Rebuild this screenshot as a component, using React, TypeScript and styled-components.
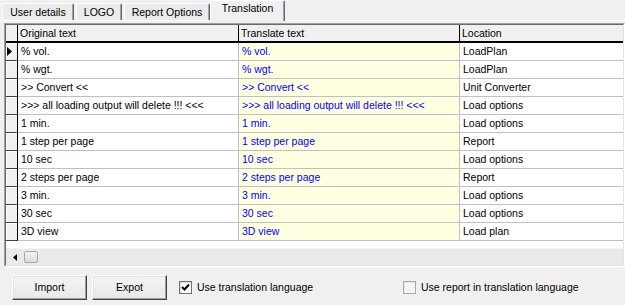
import styled, { createGlobalStyle } from 'styled-components';

const GlobalStyle = createGlobalStyle`
  html, body {
    margin: 0;
    padding: 0;
    background: #f0f0f0;
  }
  body {
    font-family: 'Liberation Sans', Arial, sans-serif;
    font-size: 10.5px;
    color: #000;
  }
`;

const rows = [
  { original: '% vol.', location: 'LoadPlan' },
  { original: '% wgt.', location: 'LoadPlan' },
  { original: '>> Convert <<', location: 'Unit Converter' },
  { original: '>>> all loading output will delete !!! <<<', location: 'Load options' },
  { original: '1 min.', location: 'Load options' },
  { original: '1 step per page', location: 'Report' },
  { original: '10 sec', location: 'Load options' },
  { original: '2 steps per page', location: 'Report' },
  { original: '3 min.', location: 'Load options' },
  { original: '30 sec', location: 'Load options' },
  { original: '3D view', location: 'Load plan' },
];

const tabs = [
  { label: 'User details', width: 72 },
  { label: 'LOGO', width: 46 },
  { label: 'Report Options', width: 86 },
  { label: 'Translation', width: 72, active: true },
];

export default function App() {
  return (
    <>
      <GlobalStyle />
      <Window>
        <TabBar>
          {tabs.map(({ label, width, active }) => (
            <Tab key={label} $width={width} $active={!!active}>
              {label}
            </Tab>
          ))}
        </TabBar>

        <Page>
          <GridFrame>
            <GridInner>
              <Table>
                <IndicatorHead />
                <HeadCell>Original text</HeadCell>
                <HeadCell>Translate text</HeadCell>
                <HeadCell $last>Location</HeadCell>

                {rows.map(({ original, location }, index) => (
                  <Row key={original}>
                    <Indicator>
                      {index === 0 && (
                        <svg width='5' height='9' viewBox='0 0 5 9'>
                          <path d='M0 0 L5 4.5 L0 9 Z' fill='#000' />
                        </svg>
                      )}
                    </Indicator>
                    <Cell>{original}</Cell>
                    <Cell $translated>{original}</Cell>
                    <Cell $last>{location}</Cell>
                  </Row>
                ))}
              </Table>

              <Empty />

              <HScroll>
                <ScrollArrow>
                  <svg width='4' height='7' viewBox='0 0 4 7'>
                    <path d='M4 0 L0 3.5 L4 7 Z' fill='#000' />
                  </svg>
                </ScrollArrow>
                <Thumb />
              </HScroll>
            </GridInner>
          </GridFrame>

          <Footer>
            <Button>Import</Button>
            <Button>Expot</Button>
            <Check $width={219} $first>
              <Box $checked>
                <svg width='9' height='9' viewBox='0 0 9 9'>
                  <path d='M1 4 L3.5 6.5 L8 1.5' stroke='#000' strokeWidth='2' fill='none' />
                </svg>
              </Box>
              Use translation language
            </Check>
            <Check>
              <Box />
              Use report in translation language
            </Check>
          </Footer>
        </Page>
      </Window>
    </>
  );
}

const Window = styled.div`
  width: 625px;
  height: 305px;
  overflow: hidden;
  display: flex;
  flex-direction: column;
  background: #f0f0f0;
`;

const TabBar = styled.div`
  height: 20px;
  display: flex;
  align-items: flex-end;
  gap: 2px;
  padding-left: 2px;
  position: relative;
  z-index: 1;
`;

const Tab = styled.div<{ $width: number; $active: boolean }>`
  box-sizing: border-box;
  width: ${(p) => p.$width + (p.$active ? 3 : 0)}px;
  height: ${(p) => (p.$active ? 21 : 17)}px;
  margin: ${(p) => (p.$active ? '0 0 -1px -2px' : '0')};
  padding-top: ${(p) => (p.$active ? 1 : 2)}px;
  line-height: 13px;
  text-align: center;
  background: ${(p) => (p.$active ? '#f0f0f0' : '#ebebeb')};
  border-top: 1px solid #fff;
  border-left: 1px solid #fff;
  border-right: 1px solid #696969;
  box-shadow: inset -1px 0 #a0a0a0;
  border-radius: 2px 2px 0 0;
  white-space: nowrap;
`;

const Page = styled.div`
  flex: 1;
  display: flex;
  flex-direction: column;
  border-top: 1px solid #fff;
  padding-top: 2px;
`;

const GridFrame = styled.div`
  margin-left: 4px;
  height: 244px;
  box-sizing: border-box;
  border-top: 1px solid #a0a0a0;
  border-left: 1px solid #a0a0a0;
  border-bottom: 1px solid #fff;
  border-right: 1px solid #fff;
`;

const GridInner = styled.div`
  height: 100%;
  box-sizing: border-box;
  display: flex;
  flex-direction: column;
  border-top: 1px solid #696969;
  border-left: 1px solid #696969;
  border-bottom: 1px solid #e3e3e3;
  border-right: 1px solid #e3e3e3;
  background: #fff;
  overflow: hidden;
`;

const Table = styled.div`
  display: grid;
  grid-template-columns: 12px 221px 221px 1fr;
`;

const IndicatorHead = styled.div`
  box-sizing: border-box;
  height: 18px;
  background: #f0f0f0;
  border-right: 1px solid #000;
  border-bottom: 2px solid #000;
`;

const HeadCell = styled.div<{ $last?: boolean }>`
  box-sizing: border-box;
  height: 18px;
  padding-left: 2px;
  line-height: 16px;
  background: #f0f0f0;
  border-right: ${(p) => (p.$last ? 'none' : '1px solid #000')};
  border-bottom: 2px solid #000;
  white-space: nowrap;
  overflow: hidden;
`;

const Row = styled.div`
  display: contents;
`;

const Indicator = styled.div`
  box-sizing: border-box;
  height: 18px;
  display: flex;
  align-items: center;
  padding-left: 1px;
  background: #f0f0f0;
  border-right: 1px solid #000;
  border-bottom: 1px solid #404040;
  box-shadow: inset 1px 1px #fff;
`;

const Cell = styled.div<{ $translated?: boolean; $last?: boolean }>`
  box-sizing: border-box;
  height: 18px;
  padding-left: 3px;
  line-height: 17px;
  white-space: pre;
  overflow: hidden;
  color: ${(p) => (p.$translated ? '#0000ff' : '#000')};
  background: ${(p) => (p.$translated ? '#ffffe1' : '#fff')};
  border-right: ${(p) => (p.$last ? 'none' : '1px solid #c0c0c0')};
  border-bottom: 1px solid #c0c0c0;
`;

const Empty = styled.div`
  height: 7px;
  background: #fff;
`;

const HScroll = styled.div`
  height: 17px;
  display: flex;
  align-items: center;
  background: #eaeaea;
  border-top: 1px solid #f4f4f4;
  box-sizing: border-box;
`;

const ScrollArrow = styled.div`
  width: 17px;
  height: 17px;
  display: flex;
  align-items: center;
  justify-content: center;
  padding-left: 1px;
  box-sizing: border-box;
`;

const Thumb = styled.div`
  width: 14px;
  height: 12px;
  margin-left: 1px;
  box-sizing: border-box;
  border: 1px solid #a9a9a9;
  border-radius: 2px;
  background: linear-gradient(to bottom, #f3f3f3, #dcdcdc);
`;

const Footer = styled.div`
  flex: 1;
  display: flex;
  align-items: center;
  gap: 5px;
  padding: 2px 0 0 12px;
`;

const Button = styled.div`
  box-sizing: border-box;
  width: 75px;
  height: 25px;
  display: flex;
  align-items: center;
  justify-content: center;
  background: linear-gradient(to bottom, #f4f4f4, #e8e8e8);
  border-top: 1px solid #fff;
  border-left: 1px solid #fff;
  border-right: 1px solid #404040;
  border-bottom: 1px solid #404040;
  box-shadow: inset -1px -1px #a0a0a0, inset 1px 1px #e3e3e3;
`;

const Check = styled.label<{ $width?: number; $first?: boolean }>`
  display: flex;
  align-items: center;
  gap: 5px;
  white-space: nowrap;
  width: ${(p) => (p.$width ? `${p.$width}px` : 'auto')};
  margin-left: ${(p) => (p.$first ? 7 : 0)}px;
`;

const Box = styled.span<{ $checked?: boolean }>`
  box-sizing: border-box;
  width: 13px;
  height: 13px;
  display: flex;
  align-items: center;
  justify-content: center;
  background: ${(p) => (p.$checked ? '#fff' : '#f4f4f4')};
  border: 1px solid ${(p) => (p.$checked ? '#707070' : '#a8a8a8')};
  box-shadow: inset 1px 1px ${(p) => (p.$checked ? '#dcdcdc' : '#e8e8e8')};
`;
